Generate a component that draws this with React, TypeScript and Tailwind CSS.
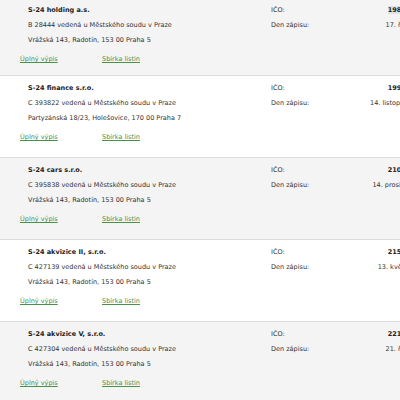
import React from "react";

type Item = {
  name: string;
  reg: string;
  addr: string;
  ico: string;
  date: string;
  gray: boolean;
  hl?: boolean;
};

const items: Item[] = [
  { name: "S-24 holding a.s.", reg: "B 28444 vedená u Městského soudu v Praze", addr: "Vrážská 143, Radotín, 153 00 Praha 5", ico: "19887141", date: "17. října 2008", gray: true, hl: true },
  { name: "S-24 finance s.r.o.", reg: "C 393822 vedená u Městského soudu v Praze", addr: "Partyzánská 18/23, Holešovice, 170 00 Praha 7", ico: "19962223", date: "14. listopadu 2008", gray: false },
  { name: "S-24 cars s.r.o.", reg: "C 395838 vedená u Městského soudu v Praze", addr: "Vrážská 143, Radotín, 153 00 Praha 5", ico: "21032599", date: "14. prosince 2006", gray: true },
  { name: "S-24 akvizice II, s.r.o.", reg: "C 427139 vedená u Městského soudu v Praze", addr: "Vrážská 143, Radotín, 153 00 Praha 5", ico: "21577307", date: "13. května 2010", gray: false },
  { name: "S-24 akvizice V, s.r.o.", reg: "C 427304 vedená u Městského soudu v Praze", addr: "Vrážská 143, Radotín, 153 00 Praha 5", ico: "22128816", date: "21. října 2010", gray: true },
];

function Row({ it, first }: { it: Item; first: boolean }) {
  return (
    <div
      className={`flex items-start border-b border-[#dcdcdc] ${it.gray ? "bg-[#f4f4f4]" : "bg-white"} ${first ? "pt-[3px] pb-[8px]" : "pt-[5px] pb-[12px]"}`}
    >
      <div className="w-[271px] shrink-0">
        <div className="pl-[28px] leading-[15px]">
          <div className="font-bold text-[#222]">{it.name}</div>
          <div>{it.reg}</div>
          <div>{it.addr}</div>
        </div>
        <div className="mt-[4px] flex pl-[20px] leading-[15px]">
          <a className="w-[82px] text-[#4a8f4a] underline">Úplný výpis</a>
          <a className="text-[#4a8f4a] underline">Sbírka listin</a>
        </div>
      </div>
      <div className="grid w-[160px] shrink-0 grid-cols-[95px_1fr] content-start leading-[15px]">
        <div>IČO:</div>
        <div className="pr-[7px] text-right font-bold text-[#222]">
          <span className={it.hl ? "bg-[#e2e2e2]" : ""}>{it.ico}</span>
        </div>
        <div>Den zápisu:</div>
        <div className="whitespace-nowrap text-right">{it.date}</div>
      </div>
    </div>
  );
}

export default function App() {
  return (
    <div className="h-[400px] w-[400px] overflow-hidden bg-white">
      <div
        className="w-[460px] text-[6.5px] text-[#333]"
        style={{ fontFamily: '"DejaVu Sans", Verdana, sans-serif' }}
      >
        {items.map((it, i) => (
          <Row key={i} it={it} first={i === 0} />
        ))}
      </div>
    </div>
  );
}
